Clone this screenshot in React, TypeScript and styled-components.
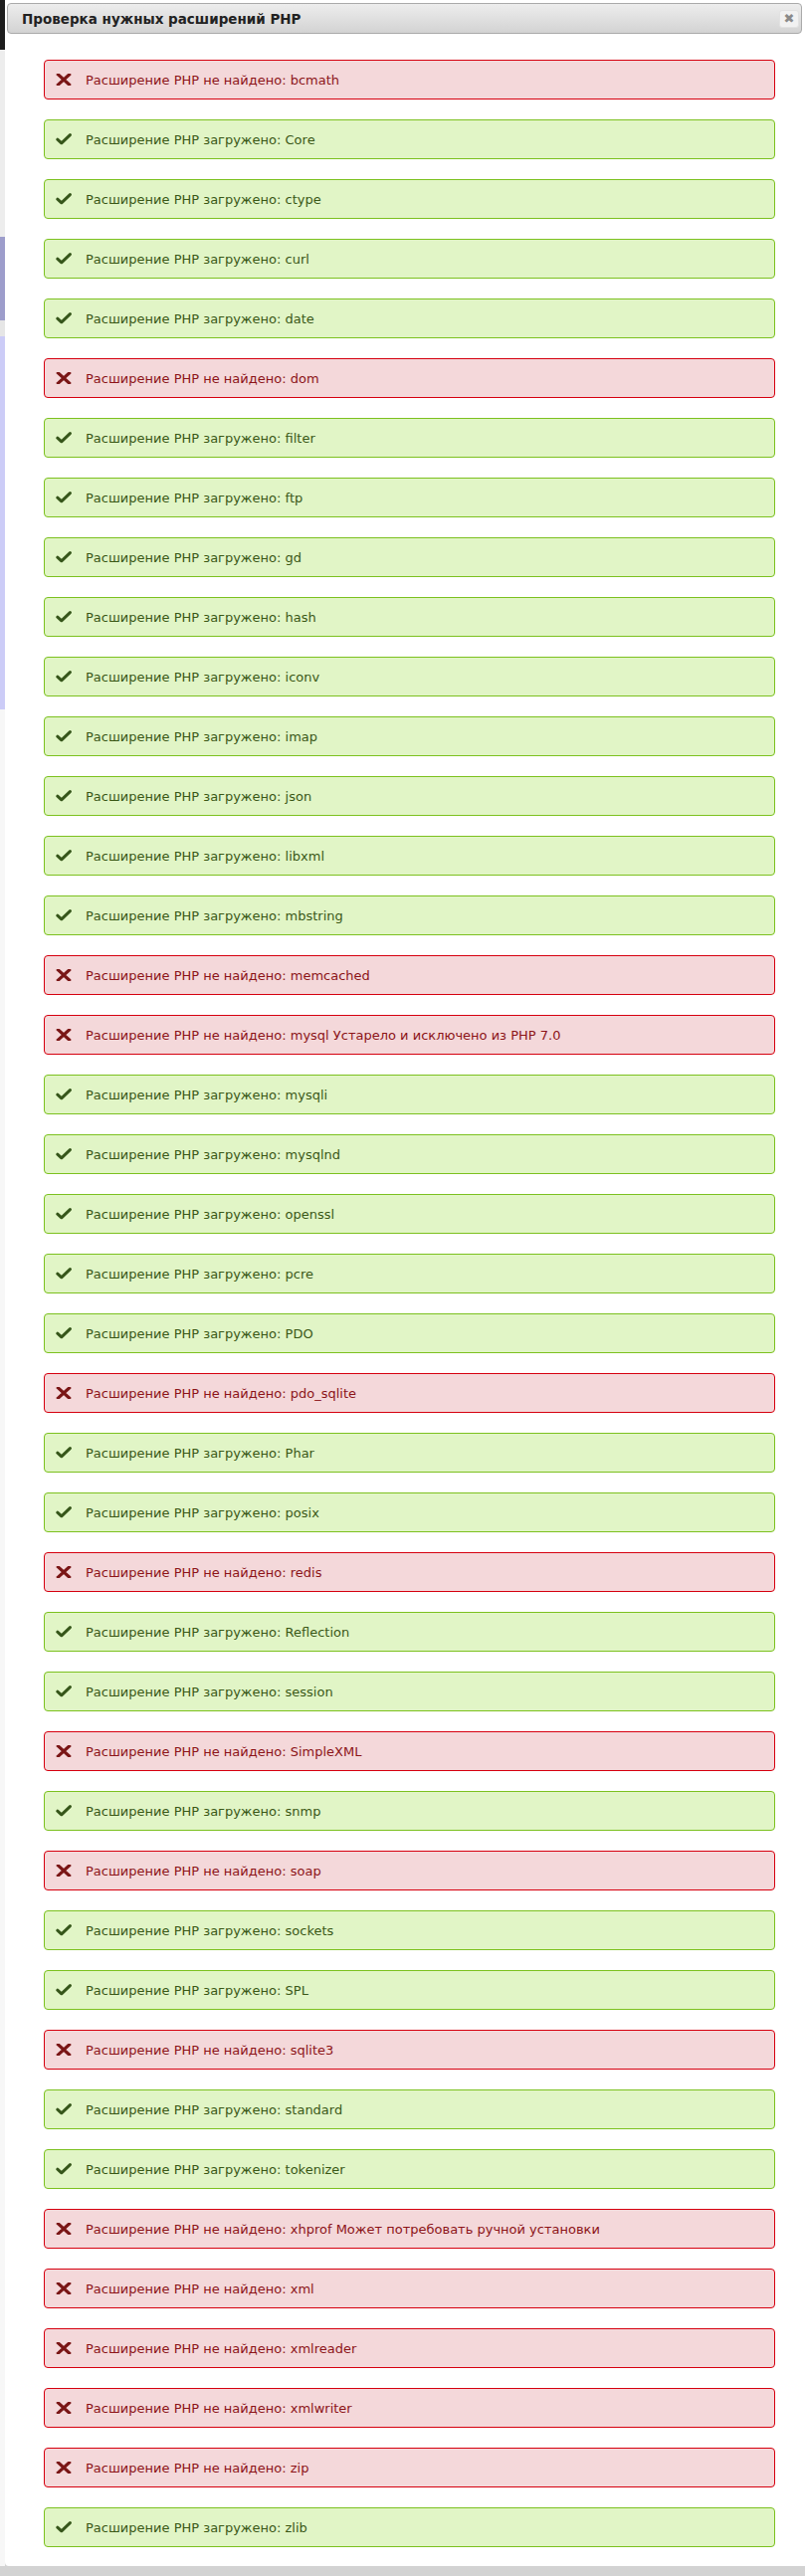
import styled, { createGlobalStyle } from "styled-components";

type Ext = { name: string; ok: boolean; note?: string };

const extensions: Ext[] = [
  { name: "bcmath", ok: false },
  { name: "Core", ok: true },
  { name: "ctype", ok: true },
  { name: "curl", ok: true },
  { name: "date", ok: true },
  { name: "dom", ok: false },
  { name: "filter", ok: true },
  { name: "ftp", ok: true },
  { name: "gd", ok: true },
  { name: "hash", ok: true },
  { name: "iconv", ok: true },
  { name: "imap", ok: true },
  { name: "json", ok: true },
  { name: "libxml", ok: true },
  { name: "mbstring", ok: true },
  { name: "memcached", ok: false },
  { name: "mysql", ok: false, note: "Устарело и исключено из PHP 7.0" },
  { name: "mysqli", ok: true },
  { name: "mysqlnd", ok: true },
  { name: "openssl", ok: true },
  { name: "pcre", ok: true },
  { name: "PDO", ok: true },
  { name: "pdo_sqlite", ok: false },
  { name: "Phar", ok: true },
  { name: "posix", ok: true },
  { name: "redis", ok: false },
  { name: "Reflection", ok: true },
  { name: "session", ok: true },
  { name: "SimpleXML", ok: false },
  { name: "snmp", ok: true },
  { name: "soap", ok: false },
  { name: "sockets", ok: true },
  { name: "SPL", ok: true },
  { name: "sqlite3", ok: false },
  { name: "standard", ok: true },
  { name: "tokenizer", ok: true },
  { name: "xhprof", ok: false, note: "Может потребовать ручной установки" },
  { name: "xml", ok: false },
  { name: "xmlreader", ok: false },
  { name: "xmlwriter", ok: false },
  { name: "zip", ok: false },
  { name: "zlib", ok: true },
];

// кусочки страницы, которые видны слева из-под диалога
const backdrop = [
  { h: 50, bg: "#1d1d1d" },
  { h: 188, bg: "#ededed" },
  { h: 84, bg: "#9d9dcb" },
  { h: 16, bg: "#e6e6e6" },
  { h: 375, bg: "#ccccf7" },
  { h: 1866, bg: "#f7f7f7" },
];

function CrossIcon() {
  return (
    <svg width="16" height="12" viewBox="0 0 16 12">
      <path d="M2.5 1 L13.5 11 M13.5 1 L2.5 11" stroke="#7a1616" strokeWidth="3.2" strokeLinecap="square" fill="none" />
    </svg>
  );
}

function CheckIcon() {
  return (
    <svg width="16" height="12" viewBox="0 0 16 12">
      <path d="M1.8 6.2 L5.8 9.8 L14.4 1.6" stroke="#36561a" strokeWidth="3" strokeLinecap="round" strokeLinejoin="round" fill="none" />
    </svg>
  );
}

export default function App() {
  return (
    <>
      <GlobalStyle />
      <Page>
        <Main>
          <Backdrop>
            {backdrop.map((b, i) => (
              <Band key={i} $h={b.h} $bg={b.bg} />
            ))}
          </Backdrop>
          <Dialog>
            <TitleBar>
              <Title>Проверка нужных расширений PHP</Title>
              <CloseBtn>✖</CloseBtn>
            </TitleBar>
            <List>
              {extensions.map((e) => (
                <Alert key={e.name} $ok={e.ok}>
                  <IconBox>{e.ok ? <CheckIcon /> : <CrossIcon />}</IconBox>
                  <span>
                    {e.ok ? "Расширение PHP загружено: " : "Расширение PHP не найдено: "}
                    {e.name}
                    {e.note ? " " + e.note : ""}
                  </span>
                </Alert>
              ))}
            </List>
          </Dialog>
        </Main>
      </Page>
    </>
  );
}

const GlobalStyle = createGlobalStyle`
  body {
    margin: 0;
    background: #d3d3d3;
    font-family: "DejaVu Sans", Verdana, sans-serif;
  }
`;

const Page = styled.div`
  width: 809px;
  height: 2589px;
  display: flex;
  flex-direction: column;
  background: #d3d3d3;
  overflow: hidden;
`;

const Main = styled.div`
  display: flex;
  height: 2579px;
`;

const Backdrop = styled.div`
  width: 5px;
  display: flex;
  flex-direction: column;
  background: #f7f7f7;
`;

const Band = styled.div<{ $h: number; $bg: string }>`
  height: ${(p) => p.$h}px;
  background: ${(p) => p.$bg};
  flex-shrink: 0;
`;

const Dialog = styled.div`
  flex: 1;
  background: #fff;
  border-bottom-left-radius: 4px;
  padding: 3px 3px 0 2px;
  display: flex;
  flex-direction: column;
`;

const TitleBar = styled.div`
  height: 31px;
  box-sizing: border-box;
  border: 1px solid #aaaaaa;
  border-radius: 4px;
  background: linear-gradient(#ededed, #d3d3d3);
  display: flex;
  align-items: center;
  justify-content: space-between;
  padding: 0 2px 0 14px;
`;

const Title = styled.div`
  font-size: 13.5px;
  font-weight: bold;
  color: #222;
`;

const CloseBtn = styled.div`
  width: 20px;
  height: 18px;
  border-radius: 3px;
  background: #f1f1f1;
  border: 1px solid #e2e2e2;
  box-sizing: border-box;
  color: #8a8a8a;
  font-size: 13px;
  line-height: 1;
  display: flex;
  align-items: center;
  justify-content: center;
`;

const List = styled.div`
  display: flex;
  flex-direction: column;
  gap: 20px;
  padding: 26px 27px 0 37px;
`;

const Alert = styled.div<{ $ok: boolean }>`
  height: 40px;
  box-sizing: border-box;
  border: 1px solid ${(p) => (p.$ok ? "#7cc11f" : "#d6000f")};
  background: ${(p) => (p.$ok ? "#e1f5c6" : "#f4d8da")};
  color: ${(p) => (p.$ok ? "#3a5816" : "#8c1418")};
  border-radius: 4px;
  display: flex;
  align-items: center;
  padding-left: 11px;
  gap: 14px;
  font-size: 13px;
`;

const IconBox = styled.div`
  width: 16px;
  height: 12px;
  display: flex;
`;
